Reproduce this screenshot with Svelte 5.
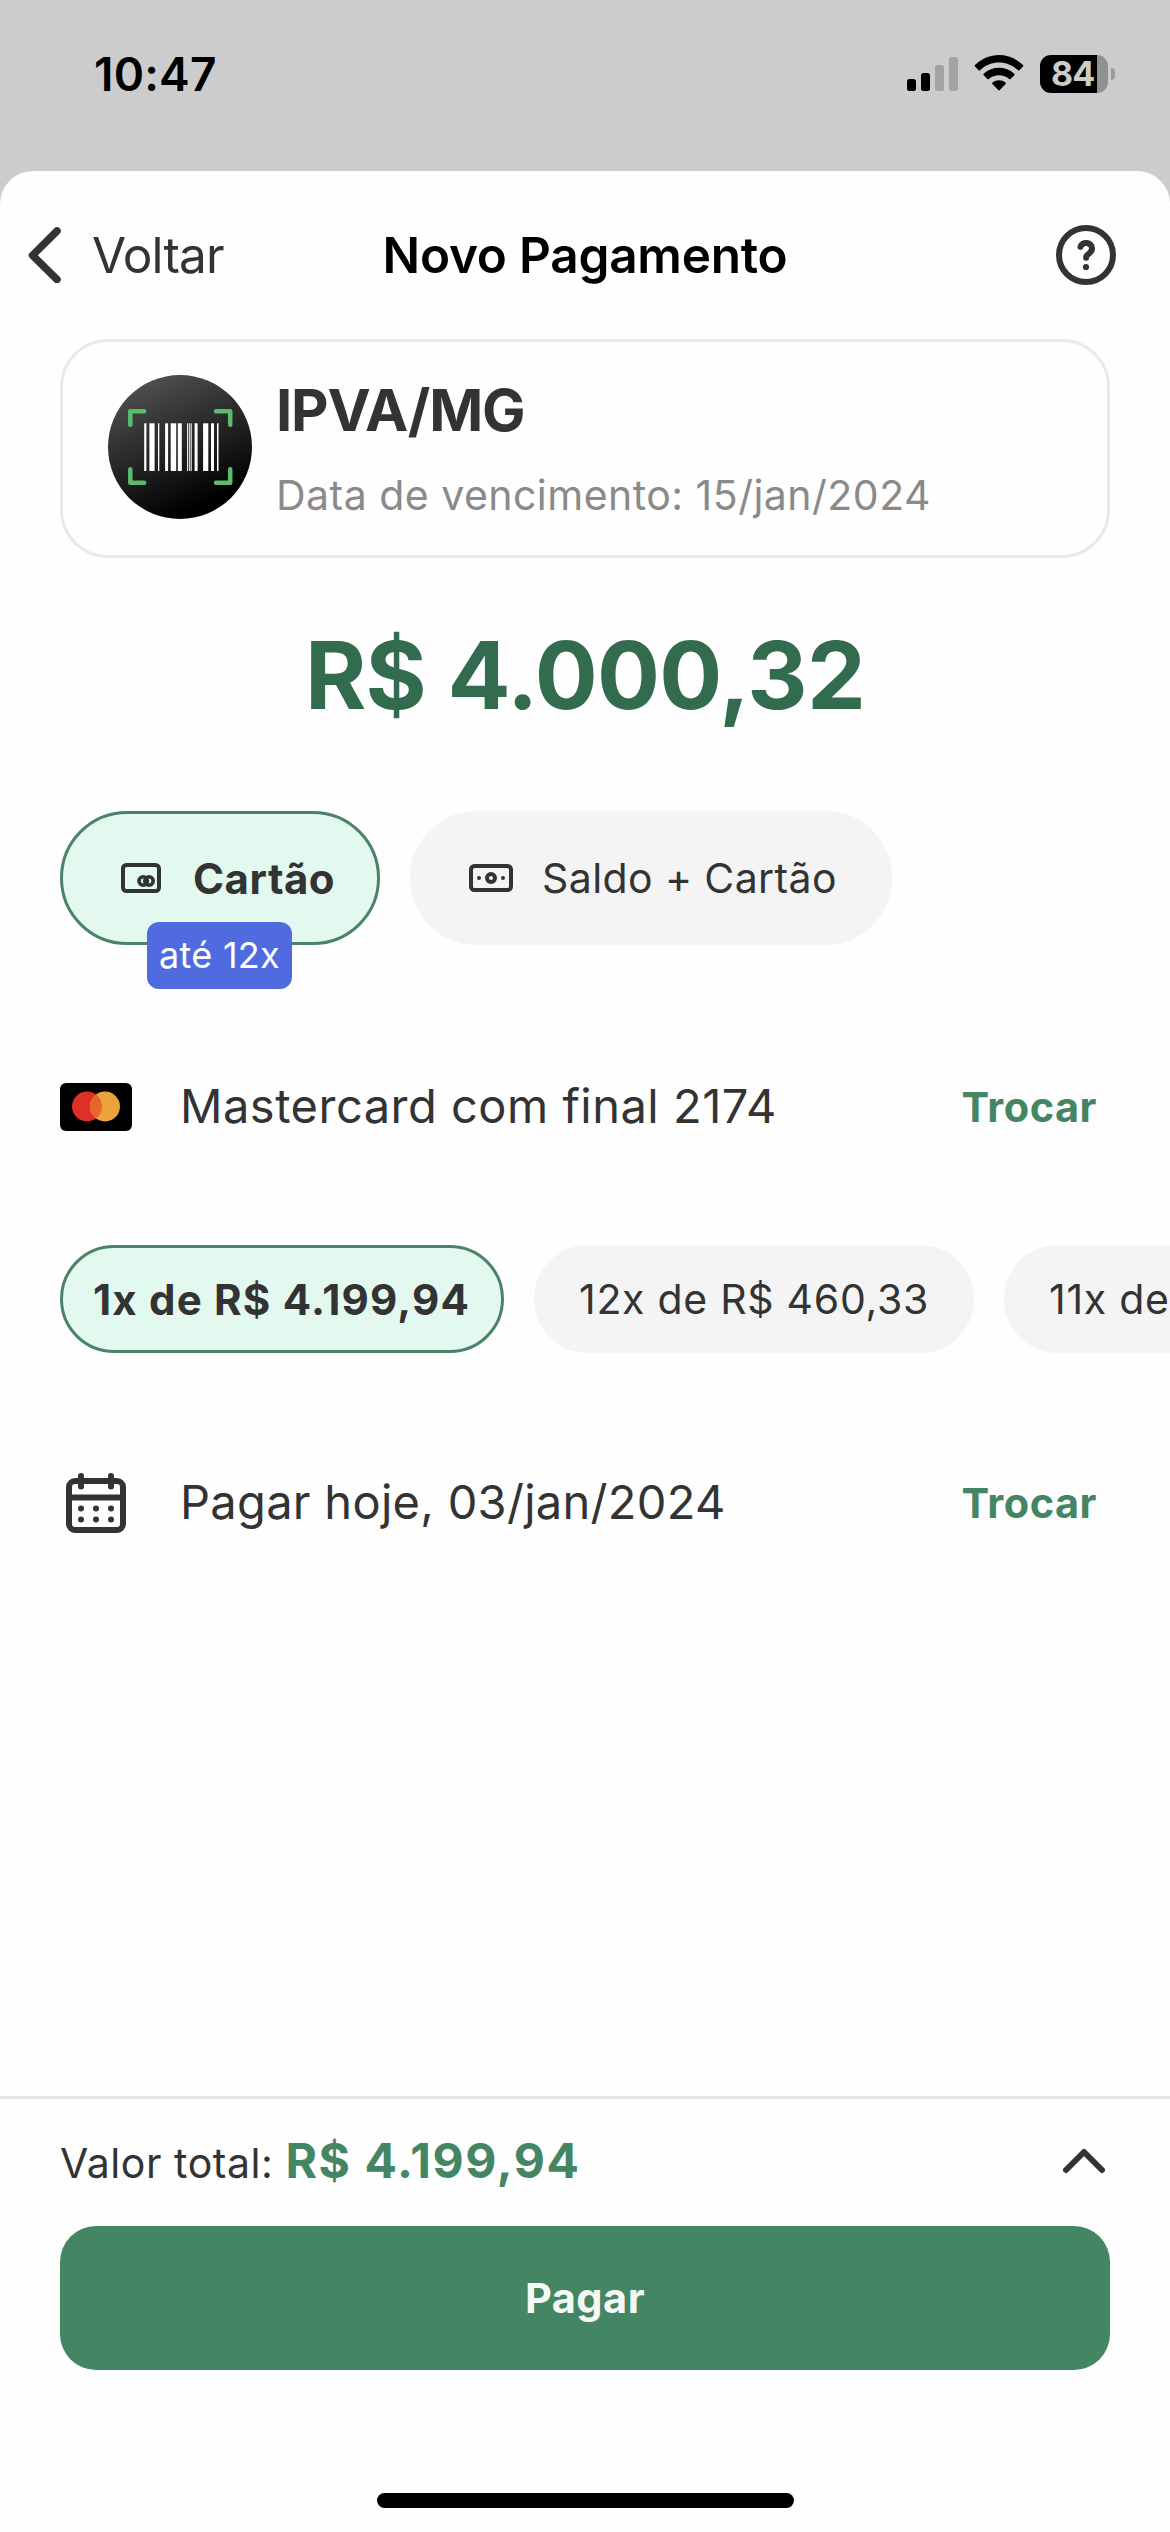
<script>
  const installments = [
    { label: '1x de R$ 4.199,94', width: 444 },
    { label: '12x de R$ 460,33', width: 440 },
    { label: '11x de R$ 499,20', width: 440 },
  ];

  // [x, width] of every bar in the barcode logo
  const bars = [
    [36.2, 2.2],
    [41.4, 5.2],
    [50, 1.3],
    [57.1, 3],
    [62.7, 5.5],
    [69.8, 4],
    [79.1, 1.1],
    [81.1, 0.8],
    [82.6, 1.1],
    [86.6, 3],
    [95.1, 5.2],
    [103, 3],
    [109, 1.5],
  ];

  let method = $state('card');
  let selected = $state(0);
</script>

<div class="screen">
  <div class="status">
    <span class="time">10:47</span>
    <div class="indicators">
      <svg width="51" height="38" viewBox="0 0 51 38">
        <rect x="0" y="24" width="9" height="12" rx="2.5" />
        <rect x="14" y="18" width="9" height="18" rx="2.5" />
        <rect x="28" y="10" width="9" height="26" rx="2.5" fill="#a3a3a3" />
        <rect x="42" y="2" width="9" height="34" rx="2.5" fill="#a3a3a3" />
      </svg>
      <svg width="50" height="38" viewBox="0 0 50 38">
        <path d="M1 11.5a1 1 0 0 1 0-1.4C14.500-3.300 35.500-3.300 49 10.100a1 1 0 0 1 0 1.400l-3.600 3.700a1 1 0 0 1-1.400 0C33.200 4.900 16.800 4.900 6 15.200a1 1 0 0 1-1.400 0z" />
        <path d="M9.700 20.200a1 1 0 0 1 0-1.500c8.700-7.800 21.900-7.800 30.600 0a1 1 0 0 1 0 1.500l-3.700 3.800a1 1 0 0 1-1.400 0c-5.900-5-14.500-5-20.400 0a1 1 0 0 1-1.400 0z" />
        <path d="M18.400 29a1 1 0 0 1 .1-1.500c3.900-2.900 9.100-2.900 13 0a1 1 0 0 1 .1 1.500l-5.800 6a1.100 1.100 0 0 1-1.600 0z" />
      </svg>
      <div class="battery">
        <span class="level">84</span>
        <span class="nub"></span>
      </div>
    </div>
  </div>

  <div class="sheet">
    <header>
      <button class="back">
        <svg width="33" height="56" viewBox="0 0 33 56" fill="none" stroke="#333" stroke-width="7.500" stroke-linecap="round" stroke-linejoin="round">
          <path d="M29 4L4.500 28.300 29 52.500" />
        </svg>
        Voltar
      </button>
      <h1>Novo Pagamento</h1>
      <button class="help" aria-label="Ajuda">
        <svg width="60" height="60" viewBox="0 0 60 60" fill="none" stroke="#333" stroke-width="6" stroke-linecap="round">
          <circle cx="30" cy="30" r="27" />
          <path d="M24.500 21.800c1.400-5.600 11.700-5 11.500 2 0 4.900-5.900 4.600-5.900 8.900" />
          <circle cx="30" cy="42" r="3.100" fill="#333" stroke="none" />
        </svg>
      </button>
    </header>

    <section class="bill">
      <svg width="144" height="144" viewBox="0 0 144 144">
        <defs>
          <linearGradient id="disc" x1="0.25" y1="0" x2="0.65" y2="0.9">
            <stop offset="0" stop-color="#525252" />
            <stop offset="1" stop-color="#000" />
          </linearGradient>
        </defs>
        <circle cx="72" cy="72" r="72" fill="url(#disc)" />
        <g fill="none" stroke="#5cbb6c" stroke-width="4.500" stroke-linecap="round" stroke-linejoin="round">
          <path d="M22.300 49.700V36.300h13.900" />
          <path d="M108 36.300h14.200v13.400" />
          <path d="M22.300 94.300v13.400h13.900" />
          <path d="M108 107.700h14.200V94.300" />
        </g>
        {#each bars as [x, width]}
          <rect {x} y="48.300" {width} height="47.700" fill="#fff" />
        {/each}
      </svg>
      <div class="info">
        <h2>IPVA/MG</h2>
        <p>Data de vencimento: 15/jan/2024</p>
      </div>
    </section>

    <p class="amount">R$ 4.000,32</p>

    <div class="methods">
      <button class="method card" class:active={method === 'card'} onclick={() => (method = 'card')}>
        <svg width="40" height="30" viewBox="0 0 40 30" fill="none" stroke="#333">
          <rect x="2" y="2" width="36" height="26" rx="3.500" stroke-width="4" />
          <circle cx="22.200" cy="18" r="4.200" stroke-width="3.600" />
          <circle cx="28" cy="18" r="4.200" stroke-width="3.600" />
        </svg>
        Cartão
        <span class="badge">até 12x</span>
      </button>
      <button class="method balance" class:active={method === 'balance'} onclick={() => (method = 'balance')}>
        <svg width="44" height="28" viewBox="0 0 44 28" fill="none" stroke="#333">
          <rect x="2" y="2" width="40" height="24" rx="3.500" stroke-width="4" />
          <circle cx="22" cy="14" r="4" stroke-width="4" />
          <circle cx="10" cy="14" r="2" fill="#333" stroke="none" />
          <circle cx="34" cy="14" r="2" fill="#333" stroke="none" />
        </svg>
        Saldo + Cartão
      </button>
    </div>

    <div class="row">
      <svg width="72" height="48" viewBox="0 0 72 48">
        <rect width="72" height="48" rx="6" />
        <circle cx="27" cy="23.500" r="15" fill="#df3028" />
        <circle cx="45" cy="23.500" r="15" fill="#eda33b" />
        <path d="M36 11.500a15 15 0 0 1 0 24a15 15 0 0 1 0-24z" fill="#e8652c" />
      </svg>
      <span class="label">Mastercard com final 2174</span>
      <button class="change">Trocar</button>
    </div>

    <div class="chips">
      {#each installments as { label, width }, i}
        <button class="chip" class:active={selected === i} style="width: {width}px" onclick={() => (selected = i)}>
          {label}
        </button>
      {/each}
    </div>

    <div class="row date">
      <svg width="72" height="60" viewBox="-6 0 72 60" fill="none" stroke="#333" stroke-width="6" stroke-linecap="round">
        <rect x="3" y="8" width="54" height="49" rx="6" />
        <path d="M15 3v10.500M45 3v10.500M3 24.500h54" />
        <g fill="#333" stroke="none">
          <circle cx="15" cy="35.500" r="3" />
          <circle cx="30" cy="35.500" r="3" />
          <circle cx="45" cy="35.500" r="3" />
          <circle cx="15" cy="46.500" r="3" />
          <circle cx="30" cy="46.500" r="3" />
          <circle cx="45" cy="46.500" r="3" />
        </g>
      </svg>
      <span class="label">Pagar hoje, 03/jan/2024</span>
      <button class="change">Trocar</button>
    </div>

    <footer>
      <div class="total">
        <span class="caption">Valor total:</span>
        <strong>R$ 4.199,94</strong>
        <svg width="44" height="26" viewBox="0 0 44 26" fill="none" stroke="#333" stroke-width="6" stroke-linecap="round" stroke-linejoin="round">
          <path d="M4 22L22 4l18 18" />
        </svg>
      </div>
      <button class="pay">Pagar</button>
      <div class="home"></div>
    </footer>
  </div>
</div>

<style>
  :global(body) {
    background-color: #ccc;
  }

  .screen {
    width: 1170px;
    height: 2532px;
    display: flex;
    flex-direction: column;
    overflow: hidden;
    background-color: #ccc;
    color: #333;
    font-family: Inter, 'Liberation Sans', sans-serif;
  }

  svg {
    display: block;
    flex: none;
  }

  button {
    margin: 0;
    padding: 0;
    border: none;
    background: none;
    color: inherit;
    font: inherit;
    white-space: nowrap;
  }

  h1,
  h2,
  p {
    margin: 0;
    white-space: nowrap;
  }

  .status {
    height: 148px;
    margin-bottom: 23px;
    padding: 0 55px 0 94px;
    display: flex;
    flex: none;
    justify-content: space-between;
    align-items: center;
    color: #000;
  }

  .time {
    font-size: 46px;
    font-weight: 600;
    letter-spacing: 0.2px;
  }

  .indicators {
    display: flex;
    align-items: center;
    gap: 16px;
  }

  .battery {
    display: flex;
    align-items: center;
    gap: 3px;
  }

  .level {
    width: 68px;
    height: 38px;
    box-sizing: border-box;
    padding-left: 11px;
    border-radius: 11px;
    background: linear-gradient(to right, #000 57px, #919191 57px);
    color: #ccc;
    font-size: 34px;
    font-weight: 700;
    line-height: 38px;
    letter-spacing: -1px;
  }

  .nub {
    width: 4px;
    height: 12px;
    border-radius: 0 4px 4px 0;
    background-color: #9c9c9c;
  }

  .sheet {
    flex: 1;
    display: flex;
    flex-direction: column;
    border-radius: 33px 33px 0 0;
    background-color: #fefefe;
  }

  header {
    height: 168px;
    padding: 0 54px 0 28px;
    display: grid;
    grid-template-columns: 1fr auto 1fr;
    align-items: center;
  }

  .back {
    display: flex;
    align-items: center;
    gap: 31px;
    font-size: 49.5px;
    letter-spacing: -0.85px;
  }

  h1 {
    margin-right: -27px;
    margin-left: -1px;
    color: #000;
    font-size: 49.5px;
    font-weight: 600;
    letter-spacing: -0.23px;
  }

  .help {
    justify-self: end;
  }

  .bill {
    height: 219px;
    margin: 0 60px;
    padding: 0 45px 3px;
    box-sizing: border-box;
    display: flex;
    align-items: center;
    gap: 24px;
    border: 3px solid #e9e9e9;
    border-radius: 48px;
  }

  .info {
    padding-top: 6px;
    display: flex;
    flex-direction: column;
    gap: 20px;
  }

  h2 {
    font-size: 58px;
    font-weight: 700;
    line-height: 70px;
    letter-spacing: -1.19px;
  }

  .info p {
    color: #8a8a8a;
    font-size: 41px;
    line-height: 60px;
    letter-spacing: 0.48px;
  }

  .amount {
    margin: 57px 0 76px;
    color: #326b4d;
    font-size: 93.5px;
    font-weight: 700;
    line-height: 120px;
    letter-spacing: -0.72px;
    text-align: center;
  }

  .methods {
    padding: 0 60px;
    display: flex;
    gap: 30px;
  }

  .method {
    position: relative;
    height: 134px;
    box-sizing: border-box;
    display: flex;
    align-items: center;
    border: 3px solid #f4f4f4;
    border-radius: 67px;
    background-color: #f4f4f4;
    font-size: 41px;
    letter-spacing: 0.4px;
  }

  .card {
    width: 320px;
    padding-left: 58px;
    gap: 32px;
  }

  .balance {
    width: 482px;
    padding-left: 56px;
    gap: 29px;
  }

  .method.active,
  .chip.active {
    border-color: #4a8367;
    background-color: #e3f8ee;
    font-weight: 700;
  }

  .method.active {
    font-size: 42px;
    letter-spacing: 0.5px;
  }

  .badge {
    position: absolute;
    top: 108px;
    left: 84px;
    width: 145px;
    height: 67px;
    border-radius: 12px;
    background-color: #506be0;
    color: #fff;
    font-size: 36px;
    font-weight: 400;
    line-height: 67px;
    letter-spacing: 0.27px;
    text-align: center;
  }

  .row {
    height: 100px;
    margin-top: 112px;
    padding: 0 73px 0 60px;
    display: flex;
    align-items: center;
  }

  .row.date {
    margin-top: 100px;
  }

  .label {
    flex: 1;
    margin-left: 48px;
    font-size: 47px;
    line-height: 98px;
    padding-bottom: 2px;
    letter-spacing: 0.5px;
  }

  .date .label {
    letter-spacing: 0.3px;
  }

  .change {
    color: #448563;
    font-size: 41.5px;
    font-weight: 700;
    letter-spacing: 0.5px;
  }

  .chips {
    margin-top: 88px;
    padding-left: 60px;
    display: flex;
    gap: 30px;
    overflow: hidden;
  }

  .chip {
    flex: none;
    height: 108px;
    box-sizing: border-box;
    padding-left: 42px;
    border: 3px solid #f4f4f4;
    border-radius: 54px;
    background-color: #f4f4f4;
    font-size: 41px;
    letter-spacing: 0.72px;
    text-align: left;
  }

  .chip.active {
    padding-left: 30px;
    font-size: 42px;
    letter-spacing: 1.2px;
  }

  footer {
    height: 436px;
    margin-top: auto;
    box-sizing: border-box;
    padding: 0 60px;
    display: flex;
    flex-direction: column;
    border-top: 3px solid #e6e6e6;
  }

  .total {
    height: 124px;
    margin-bottom: 3px;
    padding-right: 4px;
    display: flex;
    align-items: baseline;
    line-height: 124px;
  }

  .caption {
    font-size: 41px;
    letter-spacing: 0.56px;
  }

  strong {
    flex: 1;
    margin-left: 12px;
    color: #448563;
    font-size: 48px;
    letter-spacing: 1.6px;
  }

  .total svg {
    align-self: center;
  }

  .pay {
    height: 144px;
    flex: none;
    border-radius: 36px;
    background-color: #448563;
    color: #f3faf6;
    font-size: 41.5px;
    font-weight: 700;
    letter-spacing: 0.5px;
  }

  .home {
    width: 417px;
    height: 15px;
    margin: 123px auto 0;
    border-radius: 8px;
    background-color: #000;
  }
</style>
